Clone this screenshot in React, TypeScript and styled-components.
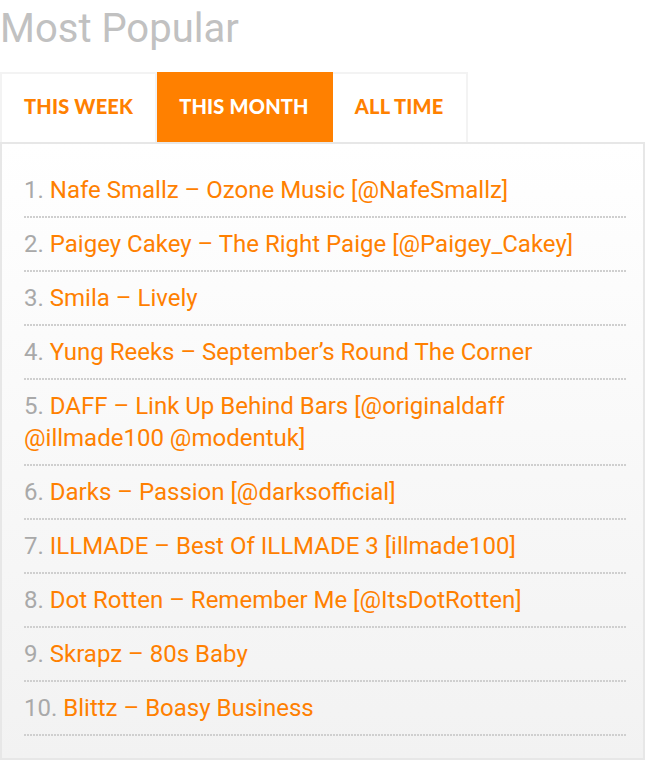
import { useState } from "react";
import styled, { createGlobalStyle } from "styled-components";

const GlobalStyle = createGlobalStyle`
  body {
    margin: 0;
    background: #fff;
    font-family: Roboto, "Liberation Sans", sans-serif;
  }
`;

const Widget = styled.section`
  width: 645px;
`;

const Title = styled.h2`
  margin: 0;
  padding-top: 5px;
  height: 67px;
  font-weight: 400;
  font-size: 40px;
  line-height: 48px;
  color: #c1c1c1;
`;

const Tabs = styled.div`
  display: flex;
`;

const Tab = styled.button<{ $active?: boolean }>`
  height: 70px;
  padding: 0 22px 4px;
  border: 2px solid ${({ $active }) => ($active ? "#ff8000" : "#f3f3f3")};
  border-bottom: none;
  background: ${({ $active }) => ($active ? "#ff8000" : "#fff")};
  color: ${({ $active }) => ($active ? "#fff" : "#ff8000")};
  font-family: Lato, "Open Sans", sans-serif;
  font-weight: 900;
  font-size: 20px;
  letter-spacing: 0.2px;
  text-transform: uppercase;
  cursor: pointer;

  & + & {
    border-left: none;
  }
`;

const Panel = styled.div`
  border: 2px solid #e7e7e7;
  background: linear-gradient(#fff, #f2f2f2);
  padding: 20px 17px 22px 22px;
`;

const List = styled.ol`
  margin: 0;
  padding: 0;
  list-style: none;
`;

const Item = styled.li`
  padding: 10px 0 12px;
  font-size: 24px;
  line-height: 32px;
  background-image: linear-gradient(to right, #cfcfcf 60%, transparent 60%);
  background-size: 3px 2px;
  background-repeat: repeat-x;
  background-position: left bottom;
`;

const Num = styled.span`
  color: #a9a9a9;
`;

const Link = styled.a`
  color: #ff8000;
  text-decoration: none;
`;

const tabs = ["This Week", "This Month", "All Time"];

const posts = [
  "Nafe Smallz – Ozone Music [@NafeSmallz]",
  "Paigey Cakey – The Right Paige [@Paigey_Cakey]",
  "Smila – Lively",
  "Yung Reeks – September’s Round The Corner",
  "DAFF – Link Up Behind Bars [@originaldaff @illmade100 @modentuk]",
  "Darks – Passion [@darksofficial]",
  "ILLMADE – Best Of ILLMADE 3 [illmade100]",
  "Dot Rotten – Remember Me [@ItsDotRotten]",
  "Skrapz – 80s Baby",
  "Blittz – Boasy Business",
];

export default function App() {
  const [active, setActive] = useState(1);
  return (
    <>
      <GlobalStyle />
      <Widget>
        <Title>Most Popular</Title>
        <Tabs>
          {tabs.map((t, i) => (
            <Tab key={t} $active={i === active} onClick={() => setActive(i)}>
              {t}
            </Tab>
          ))}
        </Tabs>
        <Panel>
          <List>
            {posts.map((p, i) => (
              <Item key={p}>
                <Num>{i + 1}. </Num>
                <Link href="#">{p}</Link>
              </Item>
            ))}
          </List>
        </Panel>
      </Widget>
    </>
  );
}
